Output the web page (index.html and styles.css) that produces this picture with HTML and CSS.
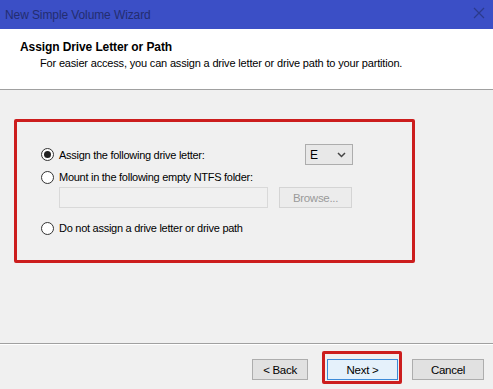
FILE: index.html
```html
<!DOCTYPE html>
<html lang="en">
  <head>
    <meta charset="UTF-8" />
    <title>New Simple Volume Wizard</title>
    <link rel="stylesheet" href="styles.css">
  </head>

  <body>
    <div class="wizard">
      <div class="titlebar">
        <span class="titlebar-text">New Simple Volume Wizard</span>
        <svg class="close" width="12" height="12" viewBox="0 0 12 12">
          <path d="M1 1 L11 11 M11 1 L1 11" stroke="#2b3a8c" stroke-width="1.2" fill="none" />
        </svg>
      </div>

      <div class="header">
        <div class="header-title">Assign Drive Letter or Path</div>
        <div class="header-sub">For easier access, you can assign a drive letter or drive path to your partition.</div>
      </div>

      <div class="content">
        <div class="highlight">
          <div class="row">
            <label class="option">
              <span class="radio checked"></span>
              Assign the following drive letter:
            </label>
            <div class="select">
              <span>E</span>
              <svg width="9" height="6" viewBox="0 0 9 6">
                <path d="M1 1 L4.5 4.5 L8 1" stroke="#444" stroke-width="1.5" fill="none" />
              </svg>
            </div>
          </div>
          <label class="option mount">
            <span class="radio"></span>
            Mount in the following empty NTFS folder:
          </label>
          <div class="row folder-row">
            <div class="textbox"></div>
            <div class="btn disabled">Browse...</div>
          </div>
          <label class="option">
            <span class="radio"></span>
            Do not assign a drive letter or drive path
          </label>
        </div>
      </div>

      <div class="footer">
        <div class="btn back">&lt; Back</div>
        <div class="next-mark">
          <div class="btn primary">Next &gt;</div>
        </div>
        <div class="btn cancel">Cancel</div>
      </div>
    </div>
  </body>
</html>
```

FILE: styles.css
```css
html {
  box-sizing: border-box;
  font-size: 11px;
  font-family: "Liberation Sans", Arial, sans-serif;
}
*,
*:before,
*:after {
  box-sizing: inherit;
}

body {
  margin: 0;
  padding: 0;
  background: #f0f0f0;
  color: #000;
}

.wizard {
  width: 493px;
  height: 389px;
  display: flex;
  flex-direction: column;
  overflow: hidden;
}

.titlebar {
  height: 29px;
  background: #3b4fc6;
  display: flex;
  align-items: center;
  justify-content: space-between;
  padding: 0 8px 0 5px;
}

.titlebar-text {
  font-size: 12px;
  color: #232d70;
  letter-spacing: -0.1px;
}

.close {
  margin-top: -3px;
}

.header {
  height: 61px;
  background: #fff;
  border-bottom: 1px solid #a0a0a0;
  padding: 11px 0 0 20px;
}

.header-title {
  font-weight: bold;
  font-size: 12px;
  letter-spacing: -0.1px;
}

.header-sub {
  margin: 3px 0 0 20px;
  letter-spacing: -0.17px;
}

.content {
  height: 254px;
  border-bottom: 1px solid #a0a0a0;
  padding: 29px 0 0 14px;
}

.highlight {
  width: 401px;
  height: 144px;
  border: 3px solid #cc1d1d;
  border-radius: 2px;
  padding: 22px 0 0 24px;
}

.row {
  display: flex;
  align-items: center;
  justify-content: space-between;
  width: 312px;
}

.option {
  display: flex;
  align-items: center;
  gap: 5px;
  height: 20px;
  letter-spacing: -0.27px;
}

.mount {
  margin-top: 2px;
}

.radio {
  width: 13px;
  height: 13px;
  border: 1px solid #333;
  border-radius: 50%;
  background: #fff;
  display: inline-flex;
  align-items: center;
  justify-content: center;
}

.radio.checked:after {
  content: "";
  width: 7px;
  height: 7px;
  border-radius: 50%;
  background: #222;
}

.select {
  width: 48px;
  height: 21px;
  border: 1px solid #adadad;
  background: #e8e8e8;
  display: flex;
  align-items: center;
  justify-content: space-between;
  padding: 0 6px 0 4px;
  font-size: 12px;
}

.folder-row {
  margin: 0 0 10px 18px;
  width: 293px;
}

.textbox {
  width: 209px;
  height: 21px;
  border: 1px solid #d9d9d9;
  background: #f0f0f0;
}

.btn {
  height: 21px;
  border: 1px solid #adadad;
  background: #e1e1e1;
  display: flex;
  align-items: center;
  justify-content: center;
  font-size: 11.5px;
  letter-spacing: -0.3px;
}

.folder-row .btn {
  width: 73px;
}

.btn.disabled {
  color: #9a9a9a;
  border-color: #d4d4d4;
  background: #ececec;
}

.footer {
  flex: 1;
  border-top: 1px solid #fff;
  display: flex;
  align-items: flex-start;
  padding: 14px 0 0 252px;
}

.btn.back {
  width: 56px;
}

.next-mark {
  margin: -8px 10px 0 14px;
  border: 3px solid #cc1d1d;
  border-radius: 2px;
  padding: 5px 1px 0 2px;
  height: 33px;
}

.btn.primary {
  width: 71px;
  border-color: #3c8ad8;
  background: #e5f1fb;
}

.btn.cancel {
  width: 72px;
}
```
